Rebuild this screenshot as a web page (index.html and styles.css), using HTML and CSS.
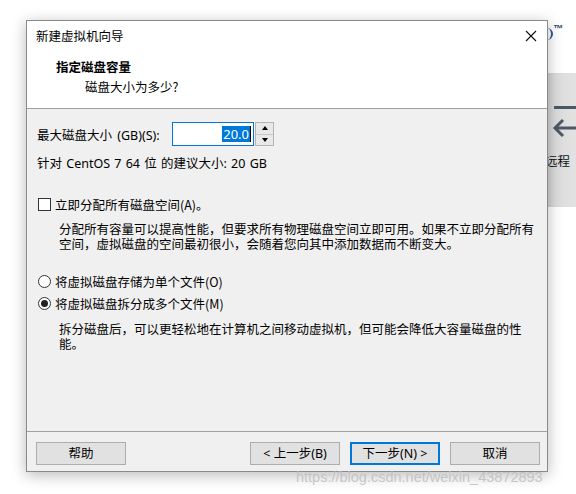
FILE: index.html
```html
<!DOCTYPE html>
<html lang="zh-CN">

<head>
    <meta charset="UTF-8">
    <meta name="viewport" content="width=device-width, initial-scale=1.0">
    <title>新建虚拟机向导</title>
    <link rel="stylesheet" href="styles.css">
</head>

<body>
    <div class="desktop">
        <!-- bits of the window behind the dialog -->
        <div class="bg-logo"><span class="logo-arc"></span><span class="tm">™</span></div>
        <div class="bg-panel">
            <div class="bar"></div>
            <div class="arrow">
                <svg width="30" height="22" viewBox="0 0 30 22">
                    <path d="M3 11 H30 M11 3 L3 11 L11 19" fill="none" stroke="#4b5967" stroke-width="3" />
                </svg>
            </div>
            <div class="panel-text">远程</div>
        </div>

        <div class="dialog">
            <div class="titlebar">
                <span class="title">新建虚拟机向导</span>
                <svg class="close" width="12" height="12" viewBox="0 0 12 12">
                    <path d="M1 1 L11 11 M11 1 L1 11" stroke="#111" stroke-width="1.1" />
                </svg>
            </div>

            <div class="header">
                <h1>指定磁盘容量</h1>
                <p>磁盘大小为多少?</p>
            </div>

            <div class="content">
                <div class="size-row">
                    <label for="size">最大磁盘大小 (GB)(S):</label>
                    <div class="spin">
                        <div class="spin-input" id="size"><span class="sel">20.0</span><span class="caret"></span></div>
                        <div class="spin-buttons">
                            <div class="spin-btn"><span class="tri up"></span></div>
                            <div class="spin-btn"><span class="tri down"></span></div>
                        </div>
                    </div>
                </div>
                <div class="hint">针对 CentOS 7 64 位 的建议大小: 20 GB</div>

                <div class="option check-row">
                    <span class="checkbox"></span>
                    <span>立即分配所有磁盘空间(A)。</span>
                </div>
                <p class="desc">分配所有容量可以提高性能，但要求所有物理磁盘空间立即可用。如果不立即分配所有空间，虚拟磁盘的空间最初很小，会随着您向其中添加数据而不断变大。</p>

                <div class="option radio-first">
                    <span class="radio"></span>
                    <span>将虚拟磁盘存储为单个文件(O)</span>
                </div>
                <div class="option radio-second">
                    <span class="radio checked"></span>
                    <span>将虚拟磁盘拆分成多个文件(M)</span>
                </div>
                <p class="desc desc-split">拆分磁盘后，可以更轻松地在计算机之间移动虚拟机，但可能会降低大容量磁盘的性能。</p>
            </div>

            <div class="footer">
                <button class="btn">帮助</button>
                <div class="spacer"></div>
                <button class="btn">&lt; 上一步(B)</button>
                <button class="btn default">下一步(N) &gt;</button>
                <button class="btn">取消</button>
            </div>
        </div>

        <div class="watermark">https://blog.csdn.net/weixin_43872893</div>
    </div>
</body>

</html>
```

FILE: styles.css
```css
body {
    margin: 0;
    padding: 0;
    background-color: #ffffff;
    font-family: "Noto Sans", "Noto Sans CJK SC", sans-serif;
    font-size: 12.5px;
    color: #000;
    overflow: hidden;
}

.desktop {
    position: relative;
    width: 576px;
    height: 494px;
    overflow: hidden;
    padding-top: 20px;
    box-sizing: border-box;
}

/* background window pieces */
.bg-logo {
    position: absolute;
    left: 544px;
    top: 26px;
    height: 16px;
}

.logo-arc {
    position: absolute;
    left: 0;
    top: 2px;
    width: 7px;
    height: 12px;
    border-right: 2px solid #2a5a9a;
    border-radius: 0 8px 8px 0;
}

.tm {
    position: absolute;
    left: 9px;
    top: -3px;
    font-size: 10px;
    font-weight: bold;
    color: #2d4a6a;
    font-family: "Liberation Sans", sans-serif;
}

.bg-panel {
    position: absolute;
    left: 540px;
    top: 73px;
    width: 36px;
    height: 134px;
    background: linear-gradient(to right, #c9c9c9, #dcdcdc 40%, #e2e2e2);
}

.bar {
    margin: 33px 0 0 14px;
    height: 3px;
    background-color: #4b5967;
}

.arrow {
    margin: 8px 0 0 12px;
    height: 22px;
}

.panel-text {
    margin: 12px 0 0 5px;
    font-family: "Noto Sans CJK SC", sans-serif;
    font-size: 12.5px;
    color: #111;
}

/* dialog */
.dialog {
    position: relative;
    margin-left: 26px;
    width: 520px;
    height: 450px;
    border: 1px solid #8a8a8a;
    background-color: #f0f0f0;
    box-shadow: 0 3px 14px rgba(0, 0, 0, 0.28);
    display: flex;
    flex-direction: column;
}

.titlebar {
    height: 29px;
    background-color: #fff;
    display: flex;
    align-items: center;
    padding: 0 9px;
}

.title {
    flex: 1;
    font-family: "Noto Sans CJK SC", sans-serif;
}

.close {
    margin-right: 1px;
}

.header {
    background-color: #fff;
    border-bottom: 1px solid #a0a0a0;
    padding: 8px 0 0 29px;
    box-sizing: border-box;
    height: 59px;
}

.header h1 {
    margin: 0;
    font-size: 12.5px;
    font-weight: bold;
    line-height: 17px;
    font-family: "Noto Sans CJK SC", sans-serif;
}

.header p {
    margin: 3px 0 0 29px;
    line-height: 17px;
    font-family: "Noto Sans CJK SC", sans-serif;
}

.content {
    flex: 1;
    padding: 13px 10px 0 10px;
}

.size-row {
    display: flex;
    align-items: center;
    height: 24px;
}

.size-row label {
    width: 135px;
    word-spacing: 2px;
}

.spin {
    display: flex;
    height: 24px;
}

.spin-input {
    width: 78px;
    height: 22px;
    border: 1px solid #0078d7;
    background-color: #fff;
    display: flex;
    align-items: center;
    justify-content: flex-end;
    padding-right: 2px;
}

.sel {
    background-color: #0078d7;
    color: #fff;
    font-size: 13px;
    line-height: 16px;
    padding: 0 1px;
}

.caret {
    width: 1px;
    height: 16px;
    background-color: #000;
}

.spin-buttons {
    width: 17px;
    height: 22px;
    margin-left: 1px;
    border: 1px solid #b5b5b5;
    display: flex;
    flex-direction: column;
}

.spin-btn {
    flex: 1;
    background-color: #e8e8e8;
    display: flex;
    align-items: center;
    justify-content: center;
}

.spin-btn + .spin-btn {
    border-top: 1px solid #c8c8c8;
}

.tri {
    width: 0;
    height: 0;
    border-left: 3.5px solid transparent;
    border-right: 3.5px solid transparent;
}

.tri.up {
    border-bottom: 4px solid #000;
}

.tri.down {
    border-top: 4px solid #000;
}

.hint {
    margin-top: 9px;
    line-height: 17px;
    word-spacing: 1px;
}

.option {
    display: flex;
    align-items: center;
    gap: 4px;
    line-height: 17px;
    margin-left: 1px;
    font-family: "Noto Sans CJK SC", sans-serif;
}

.check-row {
    margin-top: 24px;
}

.checkbox {
    width: 11px;
    height: 11px;
    border: 1px solid #333;
    background-color: #fff;
}

.radio {
    width: 11px;
    height: 11px;
    border: 1px solid #333;
    border-radius: 50%;
    background-color: #fff;
    display: flex;
    align-items: center;
    justify-content: center;
}

.radio.checked::after {
    content: "";
    width: 7px;
    height: 7px;
    border-radius: 50%;
    background-color: #222;
}

.desc {
    margin: 8px 0 0 22px;
    width: 480px;
    line-height: 15px;
    font-family: "Noto Sans CJK SC", sans-serif;
}

.radio-first {
    margin-top: 22px;
}

.radio-second {
    margin-top: 5px;
}

.desc-split {
    margin-top: 9px;
}

.footer {
    height: 40px;
    border-top: 1px solid #a0a0a0;
    display: flex;
    align-items: flex-start;
    gap: 10px;
    padding: 10px 7px 0 9px;
    box-sizing: border-box;
}

.spacer {
    flex: 1;
}

.btn {
    width: 90px;
    height: 23px;
    border: 1px solid #adadad;
    background-color: #e1e1e1;
    font-family: "Noto Sans", "Noto Sans CJK SC", sans-serif;
    font-size: 12.5px;
    color: #000;
    padding: 0;
    line-height: 19px;
}

.btn.default {
    border: 1px solid #0078d7;
    box-shadow: inset 0 0 0 1px #0078d7;
}

.watermark {
    position: absolute;
    left: 296px;
    top: 469px;
    font-family: "Liberation Sans", sans-serif;
    font-size: 14.5px;
    color: rgba(190, 190, 190, 0.85);
    white-space: nowrap;
}
```
